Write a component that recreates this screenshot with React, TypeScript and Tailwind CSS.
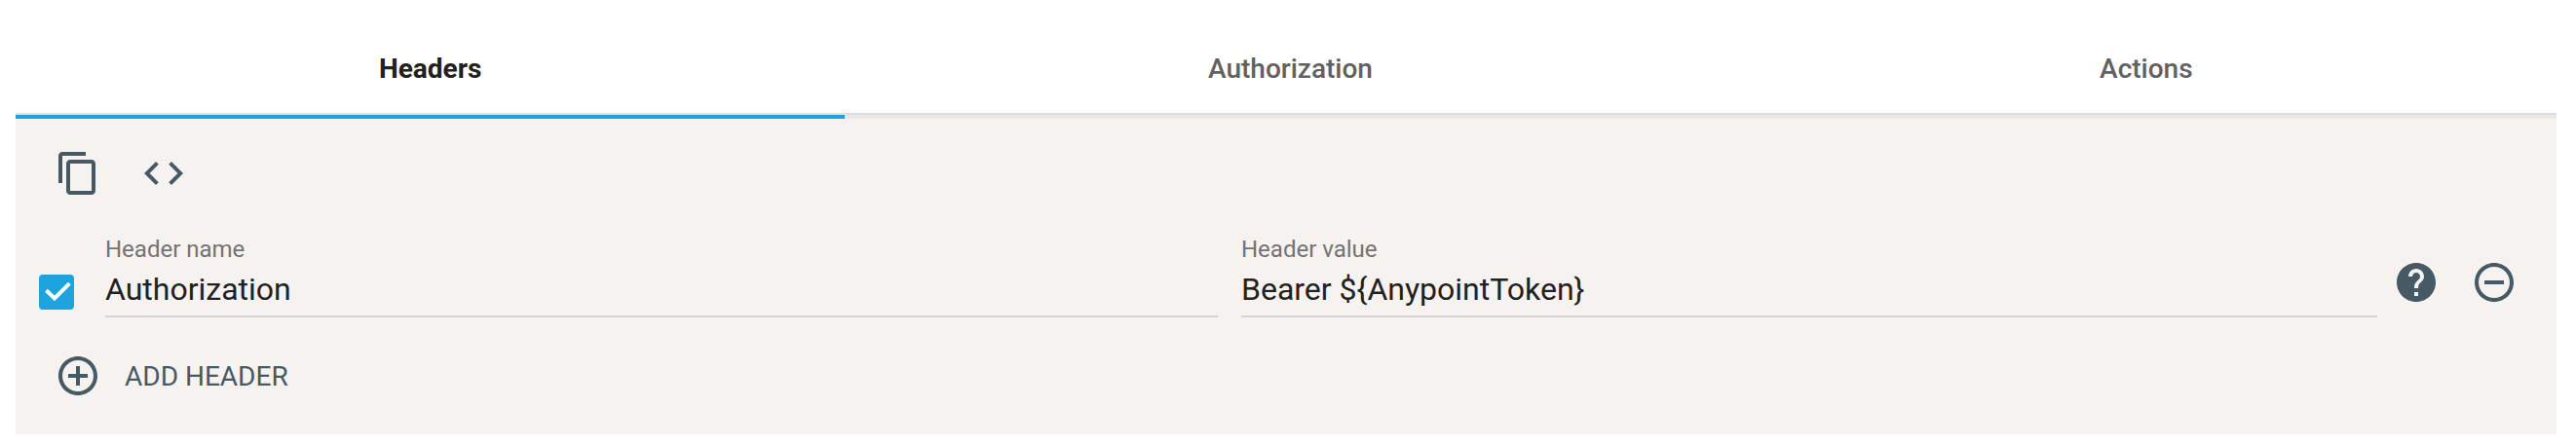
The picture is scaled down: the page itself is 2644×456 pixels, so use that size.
import React from 'react';

const Icon = ({ d, className = '' }: { d: string; className?: string }) => (
  <svg viewBox="0 0 24 24" className={`size-12 shrink-0 fill-[#455a64] ${className}`} aria-hidden="true">
    <path d={d} />
  </svg>
);

const icons = {
  copy: 'M16 1H4c-1.1 0-2 .9-2 2v14h2V3h12V1zm3 4H8c-1.1 0-2 .9-2 2v14c0 1.1.9 2 2 2h11c1.1 0 2-.9 2-2V7c0-1.1-.9-2-2-2zm0 16H8V7h11v14z',
  code: 'M9.4 16.6L4.8 12l4.6-4.6L8 6l-6 6 6 6 1.4-1.4zm5.2 0l4.6-4.6-4.6-4.6L16 6l6 6-6 6-1.4-1.4z',
  help: 'M12 2C6.48 2 2 6.48 2 12s4.48 10 10 10 10-4.48 10-10S17.52 2 12 2zm1 17h-2v-2h2v2zm2.07-7.75l-.9.92C13.45 12.9 13 13.5 13 15h-2v-.5c0-1.1.45-2.1 1.17-2.83l1.24-1.26c.37-.36.59-.86.59-1.41 0-1.1-.9-2-2-2s-2 .9-2 2H8c0-2.21 1.79-4 4-4s4 1.79 4 4c0 .88-.36 1.68-.93 2.25z',
  remove: 'M7 11v2h10v-2H7zm5-9C6.48 2 2 6.48 2 12s4.48 10 10 10 10-4.48 10-10S17.52 2 12 2zm0 18c-4.41 0-8-3.59-8-8s3.59-8 8-8 8 3.59 8 8-3.59 8-8 8z',
  add: 'M13 7h-2v4H7v2h4v4h2v-4h4v-2h-4V7zm-1-5C6.48 2 2 6.48 2 12s4.48 10 10 10 10-4.48 10-10S17.52 2 12 2zm0 18c-4.41 0-8-3.59-8-8s3.59-8 8-8 8 3.59 8 8-3.59 8-8 8z',
};

const Field = ({ label, value, className }: { label: string; value: string; className: string }) => (
  <div className={`flex h-[90px] flex-col border-b-2 border-[#d6d4d1] ${className}`}>
    <span className="h-10 text-[24px] leading-[40px] text-[#737373]">{label}</span>
    <span className="h-[42px] text-[32px] leading-[42px] text-[#212121]">{value}</span>
  </div>
);

export default function App() {
  return (
    <div className="h-[456px] w-[2644px] bg-white pt-6 pl-4 font-[Roboto,sans-serif]">
      <div className="w-[2608px]">
        <div role="tablist" className="flex h-[92px] items-center pt-[2px] text-center text-[28px] leading-[40px] font-medium text-[#616161]">
          <div role="tab" className="w-[851.3px] font-bold text-[#212121]">Headers</div>
          <div role="tab" className="w-[914.4px]">Authorization</div>
          <div role="tab" className="flex-1">Actions</div>
        </div>
        <div className="h-[2px] bg-[#dfdfde]" />
        <div className="h-1 bg-[#e8e9e8]">
          <div className="h-1 w-[851.3px] bg-[#1da4df]" />
        </div>
        <div className="h-[324px] bg-[#f5f2ef] pt-8">
          <div className="flex gap-10 pl-10">
            <Icon d={icons.copy} />
            <Icon d={icons.code} />
          </div>
          <div className="mt-[34px] flex pl-6">
            <div className="mt-[46px] mr-8 size-9 shrink-0 rounded-[4px] bg-[#1da4df]">
              <svg viewBox="0 0 36 36" className="size-9" aria-hidden="true">
                <path d="M7.5 16.2L16 24.5L31.3 9.2" fill="none" stroke="#fff" strokeWidth="4" />
              </svg>
            </div>
            <Field className="w-[1142px]" label="Header name" value="Authorization" />
            <Field className="ml-6 w-[1166px]" label="Header value" value="Bearer ${AnypointToken}" />
            <Icon d={icons.help} className="mt-[30px] ml-4" />
            <Icon d={icons.remove} className="mt-[30px] ml-8" />
          </div>
          <div className="mt-9 flex h-12 items-center pl-10">
            <Icon d={icons.add} />
            <span className="ml-6 pt-[2px] text-[28px] leading-[48px] text-[#455a64]">ADD HEADER</span>
          </div>
        </div>
      </div>
    </div>
  );
}
